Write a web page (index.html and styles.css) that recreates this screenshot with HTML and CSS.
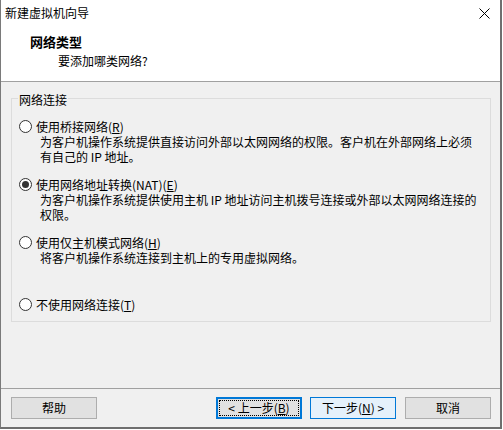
FILE: index.html
```html
<!DOCTYPE html>
<html lang="zh-CN">
<head>
<meta charset="utf-8">
<title>新建虚拟机向导</title>
<link rel="stylesheet" href="styles.css">
</head>
<body>
<div class="window">
  <div class="titlebar">
    <span class="title">新建虚拟机向导</span>
    <span class="close">
      <svg width="11" height="11" viewBox="0 0 11 11"><path d="M0.5 0.5 L10.5 10.5 M10.5 0.5 L0.5 10.5" stroke="#000" stroke-width="1" fill="none"/></svg>
    </span>
  </div>
  <div class="header">
    <div class="h-title">网络类型</div>
    <div class="h-sub">要添加哪类网络?</div>
  </div>
  <div class="content">
    <div class="group">
      <div class="legend">网络连接</div>
      <div class="option">
        <div class="opt-row"><span class="radio"></span><span>使用桥接网络(<u>R</u>)</span></div>
        <div class="desc">为客户机操作系统提供直接访问外部以太网网络的权限。客户机在外部网络上必须</div>
        <div class="desc">有自己的 IP 地址。</div>
      </div>
      <div class="option">
        <div class="opt-row"><span class="radio checked"></span><span>使用网络地址转换(NAT)(<u>E</u>)</span></div>
        <div class="desc">为客户机操作系统提供使用主机 IP 地址访问主机拨号连接或外部以太网网络连接的</div>
        <div class="desc">权限。</div>
      </div>
      <div class="option">
        <div class="opt-row"><span class="radio"></span><span>使用仅主机模式网络(<u>H</u>)</span></div>
        <div class="desc">将客户机操作系统连接到主机上的专用虚拟网络。</div>
      </div>
      <div class="option last">
        <div class="opt-row"><span class="radio"></span><span>不使用网络连接(<u>T</u>)</span></div>
      </div>
    </div>
  </div>
  <div class="footer">
    <div class="btn">帮助</div>
    <div class="spacer"></div>
    <div class="btn focus"><span class="focus-inner">&lt; 上一步(<u>B</u>)</span></div>
    <div class="btn default">下一步(<u>N</u>) &gt;</div>
    <div class="btn">取消</div>
  </div>
</div>
</body>
</html>
```

FILE: styles.css
```css
html, body {
  margin: 0;
  padding: 0;
  background: #ffffff;
}
body {
  font-family: "Noto Sans CJK SC", "Microsoft YaHei", sans-serif;
  font-size: 12px;
  color: #000;
}
.window {
  width: 502px;
  height: 429px;
  box-sizing: border-box;
  border-left: 1px solid #7a7a7a;
  border-right: 2px solid #6f6f6f;
  border-bottom: 2px solid #6f6f6f;
  background: #f0f0f0;
  display: flex;
  flex-direction: column;
}
.titlebar {
  height: 26px;
  background: #fff;
  display: flex;
  align-items: center;
  padding-left: 4px;
  padding-right: 10px;
}
.title {
  flex: 1;
  line-height: 16px;
}
.close {
  display: flex;
  align-items: center;
}
.header {
  background: #fff;
  padding: 8px 0 12px 29px;
  border-bottom: 1px solid #a0a0a0;
}
.h-title {
  font-weight: bold;
  font-size: 13px;
  line-height: 16px;
}
.h-sub {
  margin-top: 3px;
  padding-left: 28px;
  line-height: 16px;
}
.content {
  flex: 1;
  padding: 16px 9px 0 10px;
}
.group {
  border: 1px solid #dcdcdc;
  padding: 0 0 9px 6px;
}
.legend {
  display: block;
  width: fit-content;
  background: #f0f0f0;
  margin-top: -7px;
  padding: 0 1px;
  line-height: 16px;
}
.option {
  margin-top: 11px;
  line-height: 15px;
}
.option + .option {
  margin-top: 13px;
}
.option.last {
  margin-top: 32px;
}
.opt-row {
  display: flex;
  align-items: center;
  height: 15px;
  white-space: nowrap;
}
.radio {
  width: 11px;
  height: 11px;
  border: 1px solid #333;
  border-radius: 50%;
  background: #fff;
  margin-left: 1px;
  margin-right: 4px;
  display: flex;
  align-items: center;
  justify-content: center;
}
.radio.checked::before {
  content: "";
  width: 7px;
  height: 7px;
  border-radius: 50%;
  background: #333;
}
.desc {
  padding-left: 22px;
  white-space: nowrap;
  line-height: 15px;
}
u {
  text-decoration: underline;
  text-underline-offset: 1px;
}
.footer {
  border-top: 1px solid #a0a0a0;
  height: 30px;
  display: flex;
  align-items: flex-start;
  padding: 8px 9px 0 10px;
}
.spacer {
  flex: 1;
}
.btn {
  width: 86px;
  height: 22px;
  box-sizing: border-box;
  border: 1px solid #adadad;
  background: #e1e1e1;
  display: flex;
  align-items: center;
  justify-content: center;
  line-height: 16px;
  white-space: nowrap;
}
.btn + .btn {
  margin-left: 9px;
}
.btn.focus {
  border: 2px solid #0078d7;
  padding: 1px;
  margin-left: 0;
}
.focus-inner {
  flex: 1;
  align-self: stretch;
  border: 1px dotted #000;
  display: flex;
  align-items: center;
  justify-content: center;
}
.btn.default {
  border-color: #0078d7;
  background: #e5f1fb;
  margin-left: 8px;
}
```
